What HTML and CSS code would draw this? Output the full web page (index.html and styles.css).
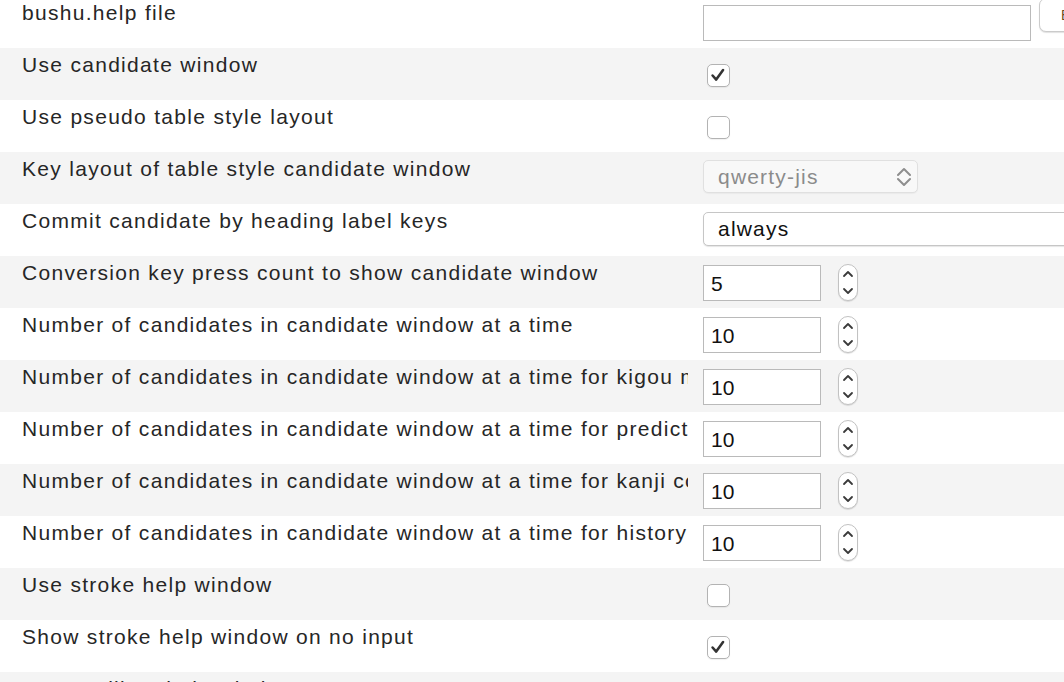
FILE: index.html
```html
<!DOCTYPE html>
<html lang="en">
<head>
<meta charset="utf-8">
<title>Preferences</title>
<link rel="stylesheet" href="styles.css">
</head>
<body>
<div class="list">
  <div class="row">
    <div class="label">bushu.help file</div>
    <div class="ctrl"><div class="field"></div><div class="browse">Browse</div></div>
  </div>
  <div class="row">
    <div class="label">Use candidate window</div>
    <div class="ctrl"><div class="check"><svg viewBox="0 0 23 23" width="21" height="21"><path d="M5 11.5 L9 16 L16.5 5.5" fill="none" stroke="#333" stroke-width="2.8" stroke-linecap="round" stroke-linejoin="round"/></svg></div></div>
  </div>
  <div class="row">
    <div class="label">Use pseudo table style layout</div>
    <div class="ctrl"><div class="check"></div></div>
  </div>
  <div class="row">
    <div class="label">Key layout of table style candidate window</div>
    <div class="ctrl"><div class="select disabled"><span>qwerty-jis</span><svg class="updown" viewBox="0 0 14 20" width="14" height="20"><path d="M1 8 L7 2 L13 8 M1 12 L7 18 L13 12" fill="none" stroke="#8e8e8e" stroke-width="2" stroke-linecap="round" stroke-linejoin="round"/></svg></div></div>
  </div>
  <div class="row">
    <div class="label">Commit candidate by heading label keys</div>
    <div class="ctrl"><div class="select wide"><span>always</span></div></div>
  </div>
  <div class="row">
    <div class="label">Conversion key press count to show candidate window</div>
    <div class="ctrl"><div class="num">5</div><div class="stepper"><svg viewBox="0 0 18 35" width="18" height="35"><path d="M5 11 L9 7 L13 11 M5 24 L9 28 L13 24" fill="none" stroke="#3a3a3a" stroke-width="1.8" stroke-linecap="round" stroke-linejoin="round"/></svg></div></div>
  </div>
  <div class="row">
    <div class="label">Number of candidates in candidate window at a time</div>
    <div class="ctrl"><div class="num">10</div><div class="stepper"><svg viewBox="0 0 18 35" width="18" height="35"><path d="M5 11 L9 7 L13 11 M5 24 L9 28 L13 24" fill="none" stroke="#3a3a3a" stroke-width="1.8" stroke-linecap="round" stroke-linejoin="round"/></svg></div></div>
  </div>
  <div class="row">
    <div class="label">Number of candidates in candidate window at a time for kigou mode</div>
    <div class="ctrl"><div class="num">10</div><div class="stepper"><svg viewBox="0 0 18 35" width="18" height="35"><path d="M5 11 L9 7 L13 11 M5 24 L9 28 L13 24" fill="none" stroke="#3a3a3a" stroke-width="1.8" stroke-linecap="round" stroke-linejoin="round"/></svg></div></div>
  </div>
  <div class="row">
    <div class="label">Number of candidates in candidate window at a time for prediction</div>
    <div class="ctrl"><div class="num">10</div><div class="stepper"><svg viewBox="0 0 18 35" width="18" height="35"><path d="M5 11 L9 7 L13 11 M5 24 L9 28 L13 24" fill="none" stroke="#3a3a3a" stroke-width="1.8" stroke-linecap="round" stroke-linejoin="round"/></svg></div></div>
  </div>
  <div class="row">
    <div class="label">Number of candidates in candidate window at a time for kanji conversion</div>
    <div class="ctrl"><div class="num">10</div><div class="stepper"><svg viewBox="0 0 18 35" width="18" height="35"><path d="M5 11 L9 7 L13 11 M5 24 L9 28 L13 24" fill="none" stroke="#3a3a3a" stroke-width="1.8" stroke-linecap="round" stroke-linejoin="round"/></svg></div></div>
  </div>
  <div class="row">
    <div class="label">Number of candidates in candidate window at a time for history</div>
    <div class="ctrl"><div class="num">10</div><div class="stepper"><svg viewBox="0 0 18 35" width="18" height="35"><path d="M5 11 L9 7 L13 11 M5 24 L9 28 L13 24" fill="none" stroke="#3a3a3a" stroke-width="1.8" stroke-linecap="round" stroke-linejoin="round"/></svg></div></div>
  </div>
  <div class="row">
    <div class="label">Use stroke help window</div>
    <div class="ctrl"><div class="check"></div></div>
  </div>
  <div class="row">
    <div class="label">Show stroke help window on no input</div>
    <div class="ctrl"><div class="check"><svg viewBox="0 0 23 23" width="21" height="21"><path d="M5 11.5 L9 16 L16.5 5.5" fill="none" stroke="#333" stroke-width="2.8" stroke-linecap="round" stroke-linejoin="round"/></svg></div></div>
  </div>
  <div class="row">
    <div class="label">Use auxiliary help window</div>
    <div class="ctrl"><div class="check"></div></div>
  </div>
</div>
</body>
</html>
```
FILE: styles.css
```css
html, body {
  margin: 0;
  padding: 0;
  background: #ffffff;
  overflow: hidden;
}

body {
  font-family: "Liberation Sans", Arial, sans-serif;
  color: #262626;
}

.list {
  margin-top: -4px;
}

.row {
  display: grid;
  grid-template-columns: 688px 376px;
  height: 52px;
  background: #ffffff;
}

.row:nth-child(even) {
  background: #f4f4f4;
}

.label {
  padding: 5px 0 0 22px;
  font-size: 21px;
  line-height: 24px;
  letter-spacing: 1.3px;
  white-space: nowrap;
  overflow: hidden;
}

.ctrl {
  display: flex;
  align-items: flex-start;
  padding: 9px 0 0 15px;
  min-width: 0;
}

.field {
  flex: none;
  width: 328px;
  height: 36px;
  box-sizing: border-box;
  border: 1px solid #bababa;
  background: #ffffff;
}

.browse {
  flex: none;
  margin: -7px 0 0 8px;
  width: 80px;
  height: 34px;
  box-sizing: border-box;
  border: 1px solid #cbcbcb;
  border-radius: 7px;
  background: #ffffff;
  box-shadow: 0 1px 1px rgba(0, 0, 0, 0.12);
  padding-left: 21px;
  font-size: 14px;
  line-height: 32px;
  color: #6a4a20;
}

.check {
  flex: none;
  margin: 7px 0 0 4px;
  width: 23px;
  height: 23px;
  box-sizing: border-box;
  border: 1px solid #b3b3b3;
  border-radius: 5px;
  background: #ffffff;
  box-shadow: 0 1px 1px rgba(0, 0, 0, 0.06);
  display: flex;
  align-items: center;
  justify-content: center;
}

.select {
  flex: none;
  margin-top: -1px;
  display: flex;
  align-items: center;
  box-sizing: border-box;
  border-radius: 5px;
  padding-left: 14px;
  font-size: 21px;
  letter-spacing: 1.2px;
}

.select.disabled {
  width: 215px;
  height: 33px;
  border: 1px solid #e0e0e0;
  background: #f8f8f8;
  color: #8b8b8b;
  box-shadow: 0 1px 1px rgba(0, 0, 0, 0.04);
}

.select.disabled .updown {
  margin-left: auto;
  margin-right: 6px;
}

.select.wide {
  width: 380px;
  height: 34px;
  border: 1px solid #c6c6c6;
  background: #ffffff;
  color: #111111;
  box-shadow: 0 1px 1px rgba(0, 0, 0, 0.1);
}

.num {
  flex: none;
  width: 118px;
  height: 36px;
  box-sizing: border-box;
  border: 1px solid #bababa;
  background: #ffffff;
  padding: 2px 0 0 7px;
  font-size: 21px;
  line-height: 32px;
  color: #111111;
}

.stepper {
  flex: none;
  margin: -1px 0 0 17px;
  width: 20px;
  height: 37px;
  box-sizing: border-box;
  border: 1px solid #c2c2c2;
  border-radius: 10px;
  background: #ffffff;
  box-shadow: 0 1px 1px rgba(0, 0, 0, 0.12);
  display: flex;
  align-items: center;
  justify-content: center;
}
```
